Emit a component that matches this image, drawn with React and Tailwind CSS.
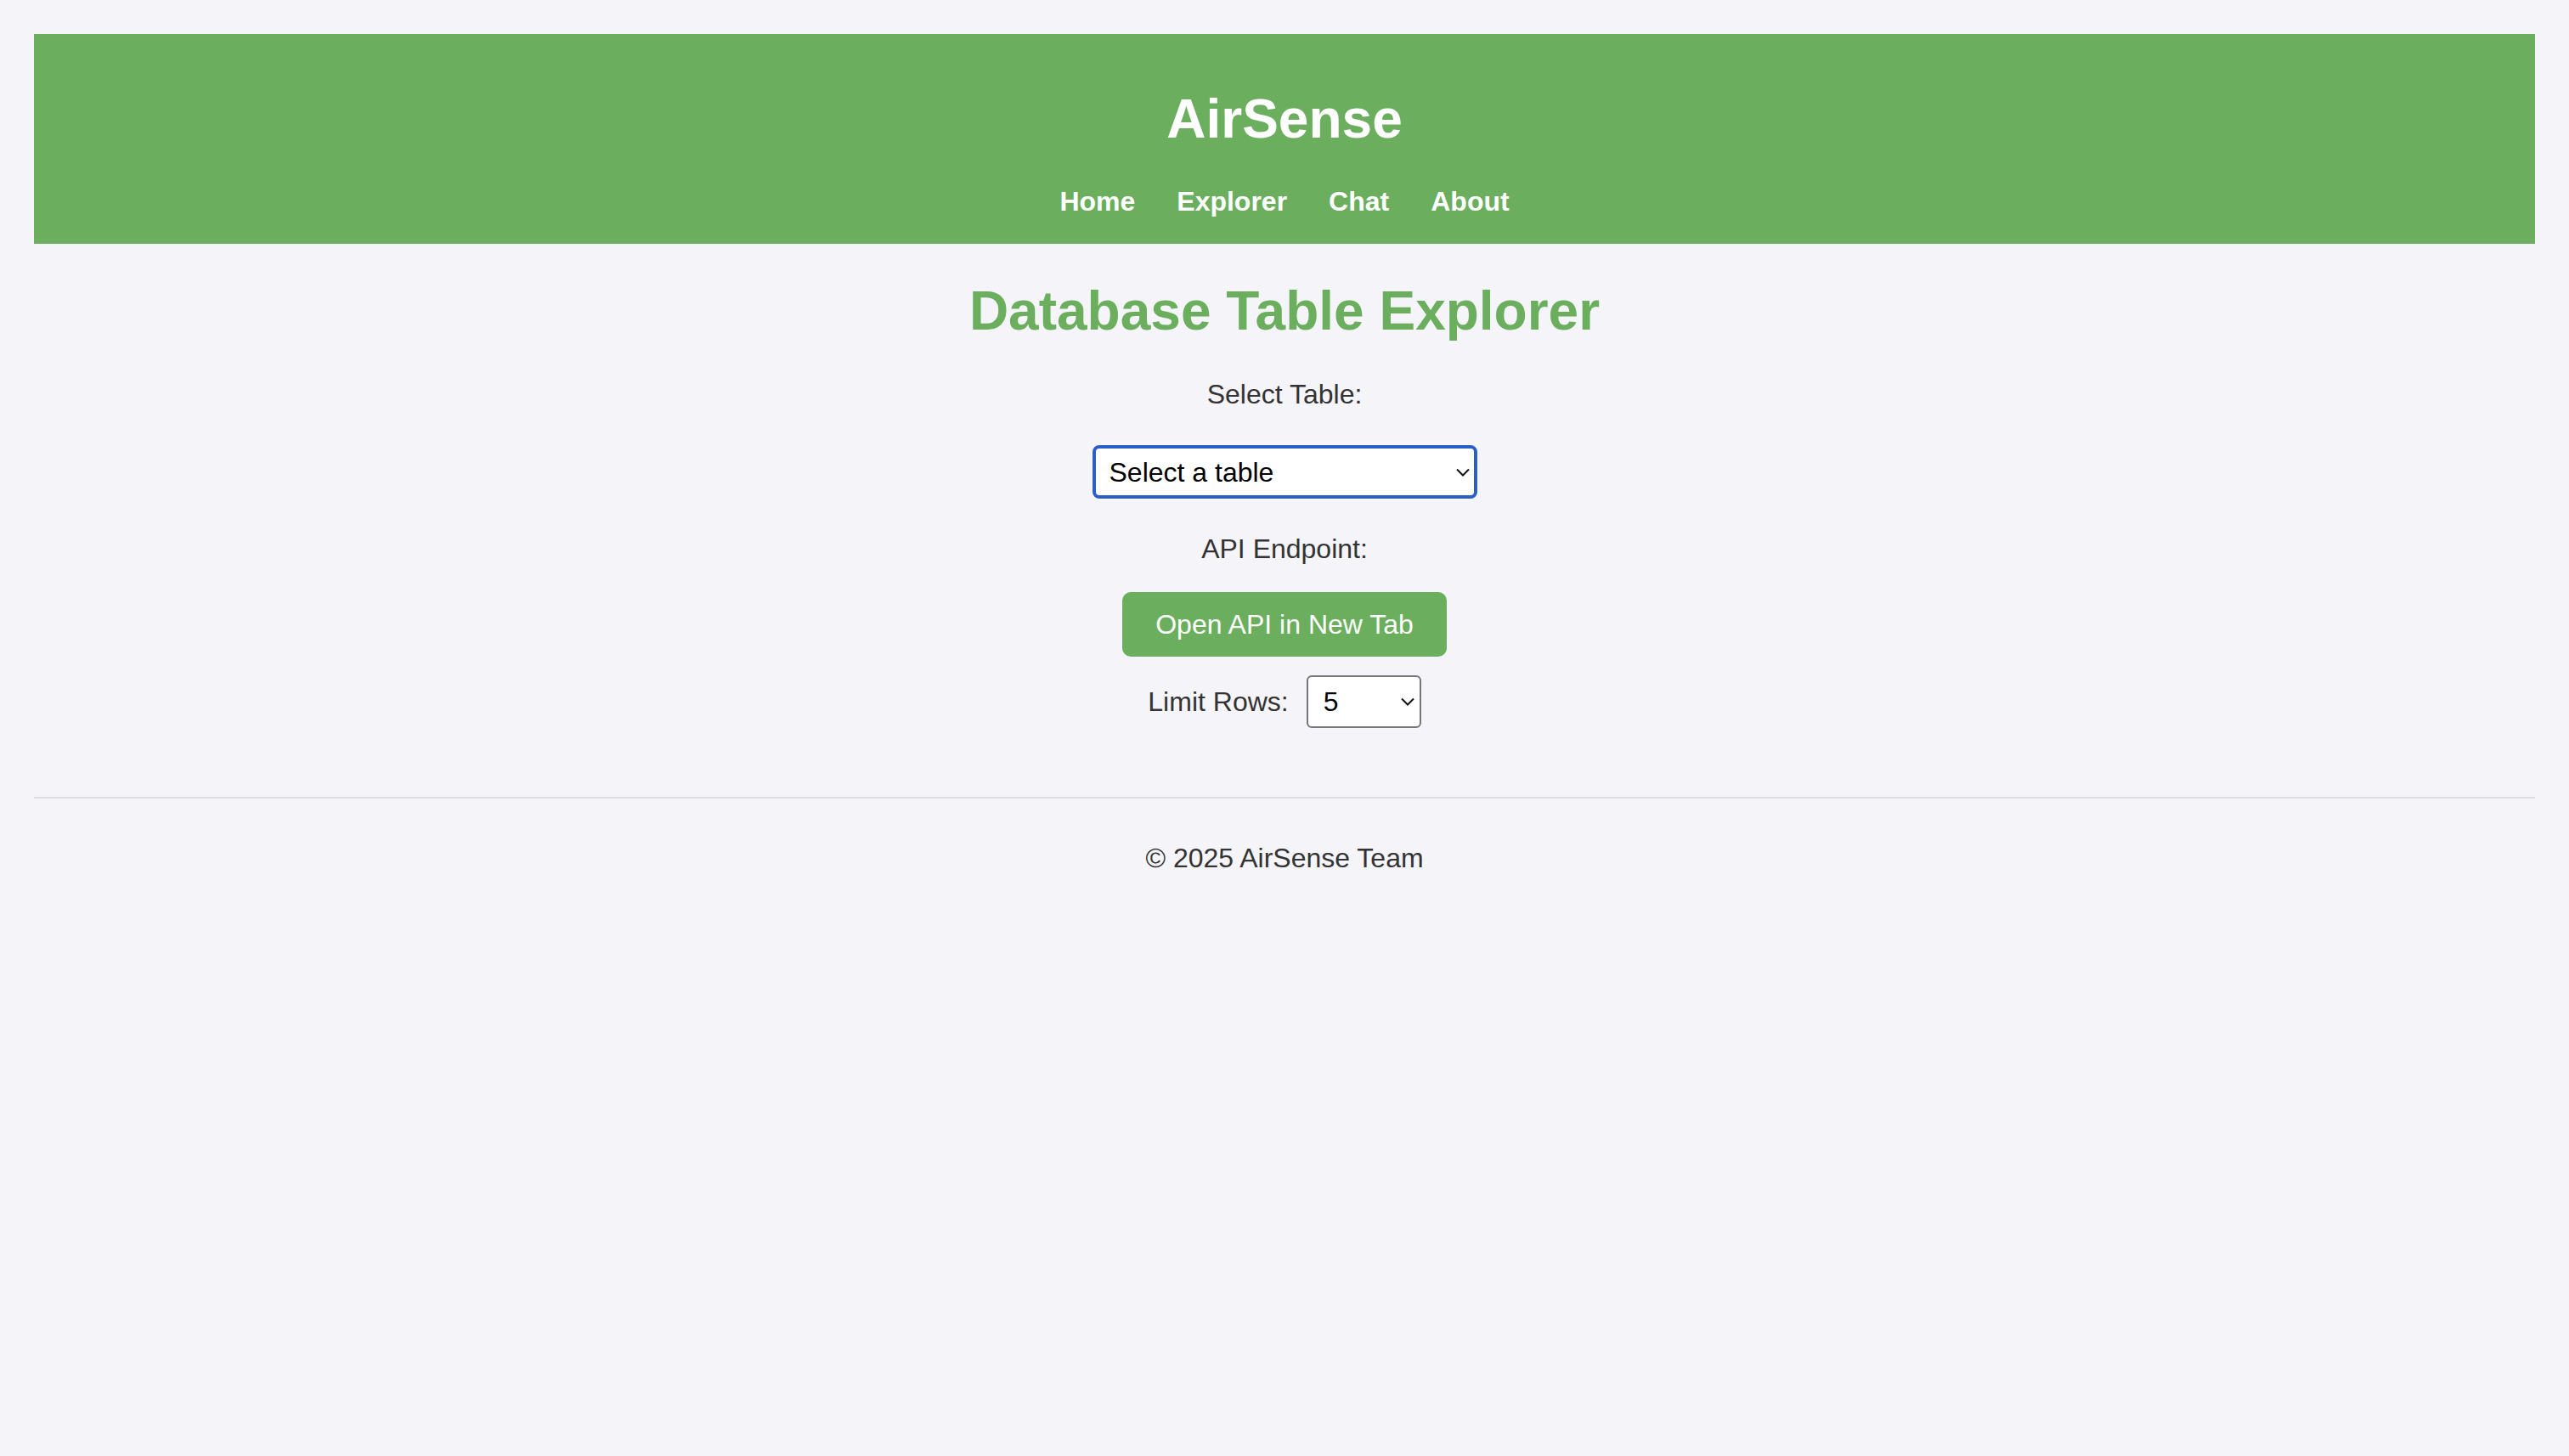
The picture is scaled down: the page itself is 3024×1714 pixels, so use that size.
const navLinks = ['Home', 'Explorer', 'Chat', 'About'];

const Chevron = ({ className }) => (
    <svg viewBox="0 0 16 10" className={className} fill="none" stroke="#111" strokeWidth="2">
        <path d="M1 1.5 L8 8.5 L15 1.5" />
    </svg>
);

const App = () => {
    return (
        <div className="min-h-screen bg-[#f4f4f9] p-[40px] text-[#333] font-['Liberation_Sans',Arial,sans-serif]">
            {/* Header */}
            <header className="bg-[#6aae5e] text-white text-center pt-[68px] pb-[34px]">
                <h1 className="text-[64px] leading-[64px] font-bold">AirSense</h1>
                <nav className="mt-[49px] flex justify-center gap-[49px] text-[32px] leading-[32px] font-bold">
                    {navLinks.map((link) => (
                        <a key={link} href="#" className="text-white">
                            {link}
                        </a>
                    ))}
                </nav>
            </header>

            {/* Nội dung */}
            <main className="flex flex-col items-center">
                <h2 className="mt-[47px] text-[64px] leading-[64px] font-bold text-[#6aae5e]">
                    Database Table Explorer
                </h2>

                <label className="mt-[50px] text-[32px] leading-[32px]">Select Table:</label>

                <div className="relative mt-[44px] rounded-[9px] shadow-[0_0_0_1px_#ffffff]">
                    <select className="appearance-none w-[453px] h-[63px] bg-white border-[4px] border-[#2a5fc9] rounded-[8px] pl-[16px] text-[32px] leading-[32px] text-black outline-none">
                        <option>Select a table</option>
                    </select>
                    <Chevron className="absolute right-[9px] top-[27px] w-[16px] h-[10px] pointer-events-none" />
                </div>

                <label className="mt-[43px] text-[32px] leading-[32px]">API Endpoint:</label>

                <button className="mt-[35px] w-[382px] h-[76px] rounded-[10px] bg-[#6aae5e] text-white text-[32px] leading-[32px]">
                    Open API in New Tab
                </button>

                <div className="mt-[22px] flex items-center gap-[21px]">
                    <label className="text-[32px] leading-[32px]">Limit Rows:</label>
                    <div className="relative">
                        <select className="appearance-none w-[135px] h-[62px] bg-white border-2 border-[#767676] rounded-[6px] pl-[18px] text-[32px] leading-[32px] text-black outline-none">
                            <option>5</option>
                            <option>10</option>
                            <option>20</option>
                        </select>
                        <Chevron className="absolute right-[8px] top-[26px] w-[16px] h-[10px] pointer-events-none" />
                    </div>
                </div>
            </main>

            {/* Footer */}
            <footer className="mt-[81px] border-t-2 border-[#dddddd] pt-[54px] text-center">
                <p className="text-[32px] leading-[32px]">© 2025 AirSense Team</p>
            </footer>
        </div>
    );
};

export default App;
